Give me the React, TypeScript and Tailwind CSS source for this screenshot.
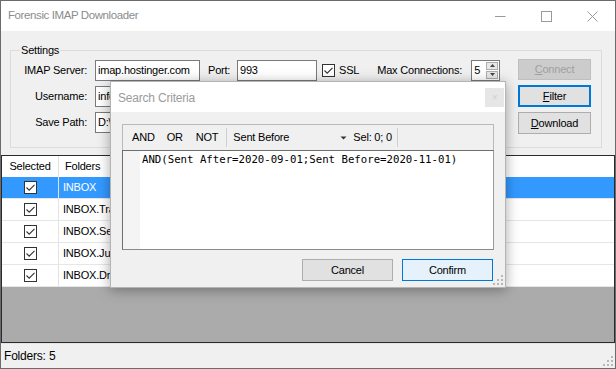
import React from 'react'

const folders = ['INBOX', 'INBOX.Trash', 'INBOX.Sent', 'INBOX.Junk', 'INBOX.Drafts']

function Check() {
  return (
    <span className="flex h-[13px] w-[13px] items-center justify-center border border-[#333333] bg-white">
      <svg width="11" height="11" viewBox="0 0 11 11">
        <path d="M1.5 5.5 L4.2 8.2 L9.5 2.8" fill="none" stroke="#333333" strokeWidth="1.1" />
      </svg>
    </span>
  )
}

function Grip() {
  return (
    <svg width="10" height="10" viewBox="0 0 10 10" fill="#b8b8b8">
      <rect x="8" y="0" width="2" height="2" />
      <rect x="4" y="4" width="2" height="2" />
      <rect x="8" y="4" width="2" height="2" />
      <rect x="0" y="8" width="2" height="2" />
      <rect x="4" y="8" width="2" height="2" />
      <rect x="8" y="8" width="2" height="2" />
    </svg>
  )
}

function TextInput({ value, w }: { value: string; w: string }) {
  return (
    <div className={`flex h-[21px] items-center overflow-hidden border border-[#7a7a7a] bg-white pl-[2px] ${w}`}>{value}</div>
  )
}

function SearchDialog() {
  return (
    <div className="absolute left-[109px] top-[80px] flex h-[207px] w-[396px] flex-col border border-[#b4b4b4] bg-[#f0f0f0] shadow-[0_2px_12px_rgba(0,0,0,0.35)]">
      <div className="flex h-[30px] bg-white">
        <span className="ml-[7px] mt-[7px] text-[12px] text-[#9b9b9b]">Search Criteria</span>
        <div className="ml-auto mr-[1px] mt-[6px] flex h-[19px] w-[19px] items-center justify-center bg-[#e6e6e6] text-[10px] text-[#d0d0d0]">
          ×
        </div>
      </div>

      <div className="flex flex-col px-[11px] pt-[12px]">
        <div className="flex h-[126px] w-[372px] flex-col">
          <div className="flex h-[26px] items-center border border-b-0 border-[#b9b9b9] bg-[#f0f0f0] pl-[9px] text-[11px] text-black">
            <span>AND</span>
            <span className="ml-[12px]">OR</span>
            <span className="ml-[13px]">NOT</span>
            <span className="ml-[8px] h-[19px] w-px bg-[#cfcfcf]" />
            <span className="ml-[6px] w-[107px]">Sent Before</span>
            <svg width="7" height="4" viewBox="0 0 7 4" className="mt-[1px]">
              <path d="M0.5 0.5 L6.5 0.5 L3.5 3.5 Z" fill="#333333" />
            </svg>
            <span className="ml-[6px]">Sel: 0; 0</span>
            <span className="ml-[5px] h-[19px] w-px bg-[#cfcfcf]" />
          </div>
          <div className="flex flex-1 border border-[#6e6e6e] border-b-[#8a8a8a] border-r-[#9a9a9a] bg-white">
            <div className="w-[17px] bg-[#f4f4f4]" />
            <div className="pl-[2px] pt-[2px] font-['DejaVu_Sans_Mono',monospace] text-[10.7px] leading-[14px] tracking-normal text-black">
              AND(Sent After=2020-09-01;Sent Before=2020-11-01)
            </div>
          </div>
        </div>

        <div className="mt-[9px] flex w-[372px] justify-end gap-[9px] pr-px text-[11px]">
          <button className="h-[22px] w-[91px] border border-[#adadad] bg-[#e1e1e1] text-black">Cancel</button>
          <button className="h-[22px] w-[91px] border border-[#0078d7] bg-[#e5f1fb] text-black">Confirm</button>
        </div>
      </div>

      <div className="absolute bottom-[2px] right-[2px]">
        <Grip />
      </div>
    </div>
  )
}

export default function App() {
  return (
    <div className="relative flex h-[369px] w-[616px] flex-col border border-[#6b6b6b] bg-[#f0f0f0] font-['Liberation_Sans',Arial,sans-serif] text-[11px] tracking-[-0.2px] text-black">
      {/* title bar */}
      <div className="flex h-[30px] shrink-0 items-center bg-white">
        <span className="ml-[7px] text-[11.5px] tracking-[-0.4px] text-[#8c8c8c]">Forensic IMAP Downloader</span>
        <div className="ml-auto flex h-full">
          <div className="flex w-[46px] items-center justify-center">
            <svg width="11" height="11" viewBox="0 0 11 11">
              <path d="M0 5.5 H10.5" stroke="#9a9a9a" strokeWidth="1" />
            </svg>
          </div>
          <div className="flex w-[46px] items-center justify-center">
            <svg width="11" height="11" viewBox="0 0 11 11">
              <rect x="0.5" y="0.5" width="10" height="10" fill="none" stroke="#9a9a9a" strokeWidth="1" />
            </svg>
          </div>
          <div className="flex w-[46px] items-center justify-center">
            <svg width="11" height="11" viewBox="0 0 11 11">
              <path d="M0.5 0.5 L10.5 10.5 M10.5 0.5 L0.5 10.5" stroke="#9a9a9a" strokeWidth="1" />
            </svg>
          </div>
        </div>
      </div>

      {/* settings */}
      <fieldset className="ml-[9px] mt-[12px] h-[105px] w-[592px] shrink-0 border border-[#dcdcdc] px-0 pb-0">
        <legend className="ml-[9px] px-[1px] leading-[14px]">Settings</legend>
        <div className="flex">
          <div className="flex w-[507px] flex-col">
            <div className="flex h-[26px] items-center">
              <span className="w-[76px] text-right">IMAP Server:</span>
              <div className="ml-[8px]">
                <TextInput value="imap.hostinger.com" w="w-[105px]" />
              </div>
              <span className="ml-[8px] w-[29px]">Port:</span>
              <TextInput value="993" w="w-[80px]" />
              <span className="ml-[5px]">
                <Check />
              </span>
              <span className="ml-[4px]">SSL</span>
              <span className="ml-[18px] w-[94px]">Max Connections:</span>
              <div className="flex h-[21px] w-[29px] border border-[#7a7a7a] bg-white">
                <span className="flex-1 pl-[2px] leading-[19px]">5</span>
                <div className="my-px mr-px flex w-[12px] flex-col gap-px">
                  <div className="flex flex-1 items-center justify-center border border-[#adadad] bg-[#e8e8e8]">
                    <svg width="5" height="3" viewBox="0 0 5 3">
                      <path d="M0 3 L2.5 0 L5 3 Z" fill="#444444" />
                    </svg>
                  </div>
                  <div className="flex flex-1 items-center justify-center border border-[#adadad] bg-[#e8e8e8]">
                    <svg width="5" height="3" viewBox="0 0 5 3">
                      <path d="M0 0 L2.5 3 L5 0 Z" fill="#444444" />
                    </svg>
                  </div>
                </div>
              </div>
            </div>
            <div className="flex h-[26px] items-center">
              <span className="w-[76px] text-right">Username:</span>
              <div className="ml-[8px]">
                <TextInput value="info" w="w-[405px]" />
              </div>
            </div>
            <div className="flex h-[26px] items-center">
              <span className="w-[76px] text-right">Save Path:</span>
              <div className="ml-[8px]">
                <TextInput value="D:\" w="w-[405px]" />
              </div>
            </div>
          </div>

          <div className="flex w-[73px] flex-col gap-[5px] pt-[2px]">
            <button className="h-[21px] border border-[#bfbfbf] bg-[#cccccc] text-[#a0a0a0]">
              <u>C</u>onnect
            </button>
            <button className="h-[22px] border-2 border-[#0078d7] bg-[#e1e1e1]">
              <u>F</u>ilter
            </button>
            <button className="h-[22px] border border-[#adadad] bg-[#e1e1e1]">
              <u>D</u>ownload
            </button>
          </div>
        </div>
      </fieldset>

      {/* grid */}
      <div className="mt-[7px] flex flex-1 flex-col border border-[#2b2b2b] bg-[#ababab]">
        <div className="flex h-[21px] items-center bg-white">
          <span className="w-[57px] self-stretch border-r border-[#e3e3e3] text-center leading-[21px]">Selected</span>
          <span className="pl-[6px]">Folders</span>
        </div>
        {folders.map((f, i) => (
          <div
            key={f}
            className={`flex h-[22px] items-center border-b border-[#e6e6e6] ${i === 0 ? 'bg-[#3399ff] text-white' : 'bg-white'}`}
          >
            <span className="flex w-[57px] items-center justify-center self-stretch border-r border-[#e3e3e3]">
              <Check />
            </span>
            <span className="pl-[4px]">{f}</span>
          </div>
        ))}
      </div>

      {/* status bar */}
      <div className="flex h-[25px] shrink-0 items-center justify-between border-t border-[#e3e3e3] pl-[3px] text-[12px]">
        <span>Folders: 5</span>
        <span className="mr-[2px] mt-[10px]">
          <Grip />
        </span>
      </div>

      <SearchDialog />
    </div>
  )
}
